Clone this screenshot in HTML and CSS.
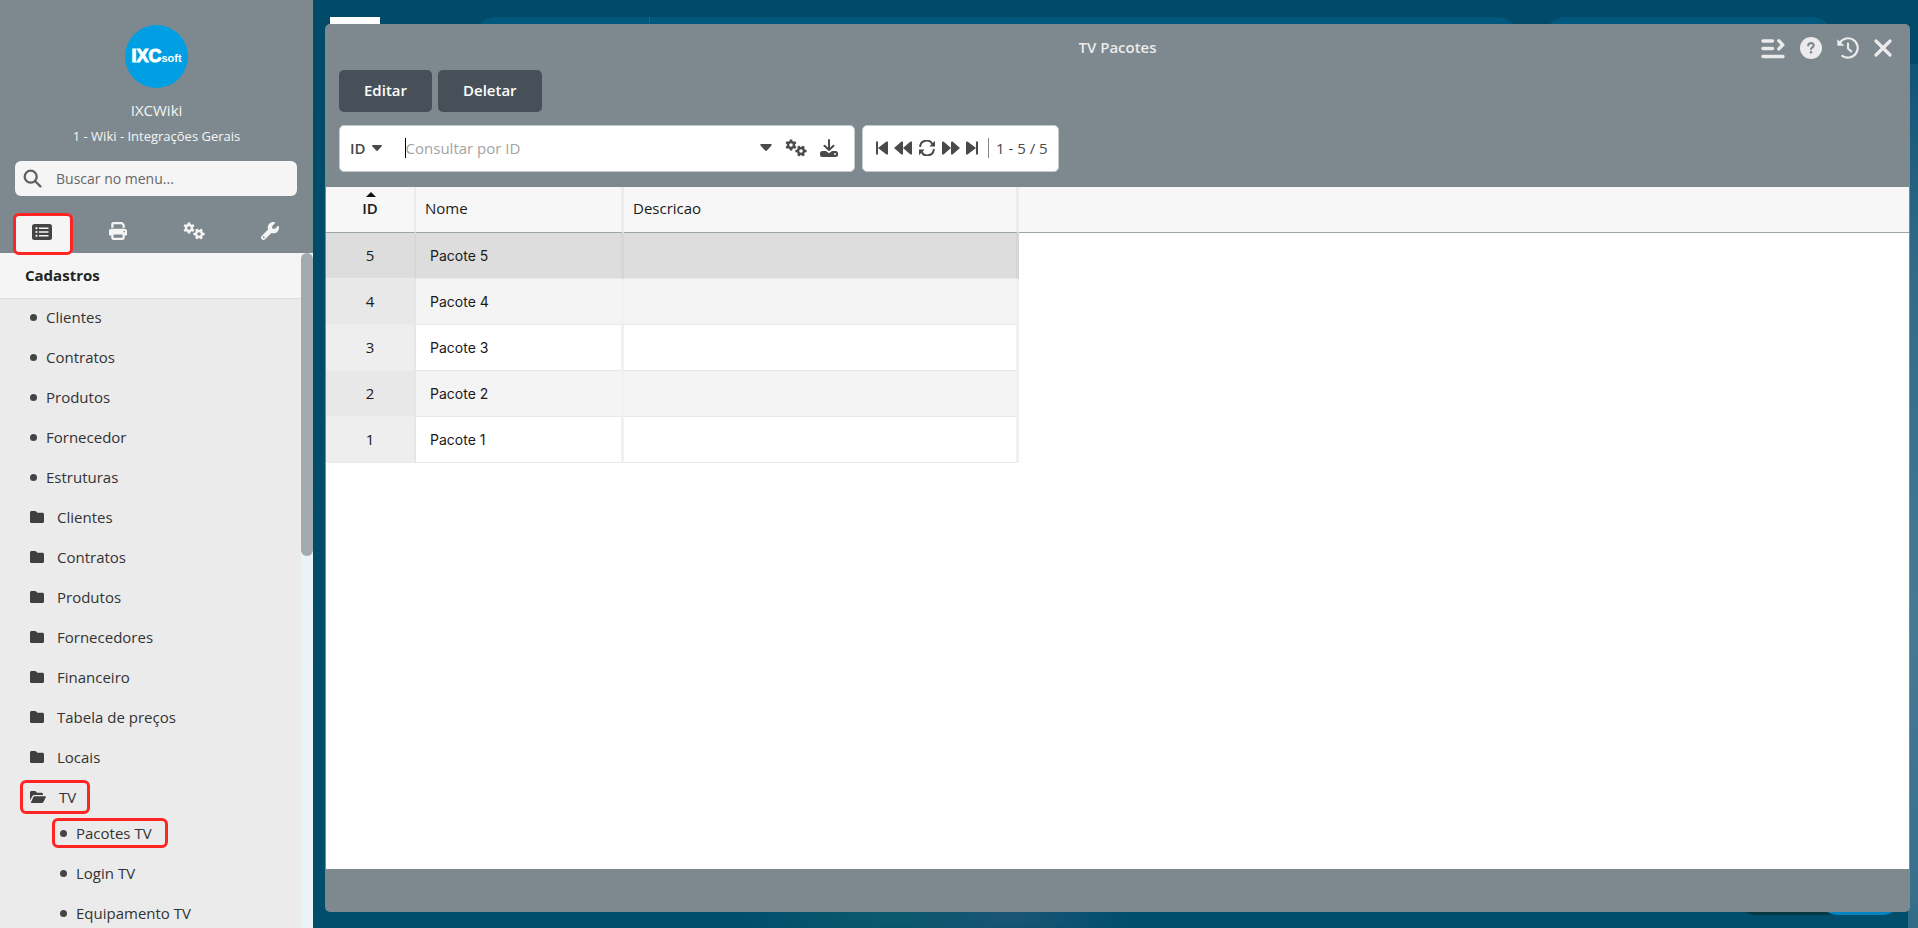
FILE: index.html
```html
<!DOCTYPE html>
<html lang="pt-BR">
<head>
<meta charset="utf-8">
<title>TV Pacotes</title>
<link rel="stylesheet" href="styles.css">
</head>
<body>
<svg class="defs" aria-hidden="true">
  <symbol id="gears" viewBox="0 0 22 18">
    <g fill="none" stroke="currentColor">
      <circle cx="6" cy="6" r="3" stroke-width="2.4"/>
      <path stroke-width="2.6" d="M6 0.4v2M6 9.6v2M1.2 3.2l1.6 1M9.2 7.8l1.6 1M1.2 8.8l1.6-1M9.2 4.2l1.6-1"/>
      <circle cx="16" cy="12" r="3" stroke-width="2.4"/>
      <path stroke-width="2.6" d="M10.4 12h2M19.6 12h2M13.2 7.2l1 1.6M17.8 15.2l1 1.6M18.8 7.2l-1 1.6M14.2 15.2l-1 1.6"/>
    </g>
  </symbol>
  <symbol id="folder" viewBox="0 0 14 12">
    <path fill="currentColor" d="M1.5 0h3.6c.5 0 .9.2 1.200.5l.8.9c.2.2.4.3.700.3h4.700c.8 0 1.500.6 1.500 1.500v7.300c0 .8-.7 1.500-1.500 1.500h-11C.7 12 0 11.300 0 10.500v-9C0 .7.700 0 1.500 0z"/>
  </symbol>
</svg>

<div class="app">
  <aside class="sidebar">
    <header class="profile">
      <div class="logo"><span class="logo-main">IXC</span><span class="logo-sub">soft</span></div>
      <p class="user">IXCWiki</p>
      <p class="company">1 - Wiki - Integrações Gerais</p>
    </header>
    <label class="menu-search">
      <svg width="19" height="19" viewBox="0 0 19 19" aria-hidden="true"><g fill="none" stroke="currentColor" stroke-width="2.300" stroke-linecap="round"><circle cx="7.700" cy="7.700" r="6"/><path d="M12.200 12.200l5.200 5.200"/></g></svg>
      <input type="text" aria-label="Buscar no menu" placeholder="Buscar no menu...">
    </label>
    <nav class="tabs">
      <button class="tab tab-active" aria-label="Cadastros"><svg width="20" height="16" viewBox="0 0 20 16"><rect width="20" height="16" rx="2.500" fill="currentColor"/><g fill="#f5f5f5"><circle cx="4.500" cy="4.200" r="1.100"/><circle cx="4.500" cy="8" r="1.100"/><circle cx="4.500" cy="11.800" r="1.100"/><path d="M7 3.500h9.500v1.500H7zM7 7.300h9.500v1.500H7zM7 11.100h9.500v1.500H7z"/></g></svg></button>
      <button class="tab" aria-label="Relatórios"><svg width="18" height="18" viewBox="0 0 512 512"><path fill="currentColor" d="M128 0C92.700 0 64 28.700 64 64v96h64V64h226.700L384 93.300V160h64V93.300c0-17-6.700-33.300-18.700-45.300L400 18.700C388 6.700 371.700 0 354.700 0H128zm256 352v96H128v-96h256zm64 32h32c17.700 0 32-14.300 32-32v-96c0-35.300-28.700-64-64-64H64c-35.300 0-64 28.700-64 64v96c0 17.700 14.300 32 32 32h32v64c0 35.300 28.700 64 64 64h256c35.300 0 64-28.700 64-64v-64zM432 248a24 24 0 1 1 0 48 24 24 0 1 1 0-48z"/></svg></button>
      <button class="tab" aria-label="Configurações"><svg width="22" height="18"><use href="#gears"/></svg></button>
      <button class="tab" aria-label="Ferramentas"><svg width="18" height="18" viewBox="0 0 512 512"><path fill="currentColor" d="M352 320c88.400 0 160-71.600 160-160 0-15.300-2.200-30.100-6.200-44.200-3.100-10.800-16.400-13.200-24.300-5.300l-76.800 76.800c-3 3-7.100 4.700-11.300 4.700H336c-8.800 0-16-7.200-16-16v-57.400c0-4.200 1.700-8.300 4.700-11.300l76.800-76.800c7.900-7.900 5.400-21.200-5.300-24.300C382.100 2.200 367.300 0 352 0 263.600 0 192 71.600 192 160c0 19.100 3.400 37.500 9.500 54.500L19.900 396.100C7.200 408.800 0 426.100 0 444.100 0 481.600 30.400 512 67.900 512c18 0 35.300-7.200 48-19.900l181.600-181.600c17 6.200 35.400 9.500 54.500 9.500zM80 408a24 24 0 1 1 0 48 24 24 0 1 1 0-48z"/></svg></button>
    </nav>
    <div class="menu">
      <div class="menu-body">
        <h2 class="menu-title">Cadastros</h2>
        <ul class="menu-list">
          <li><a href="#" class="item"><i class="dot"></i>Clientes</a></li>
          <li><a href="#" class="item"><i class="dot"></i>Contratos</a></li>
          <li><a href="#" class="item"><i class="dot"></i>Produtos</a></li>
          <li><a href="#" class="item"><i class="dot"></i>Fornecedor</a></li>
          <li><a href="#" class="item"><i class="dot"></i>Estruturas</a></li>
          <li><a href="#" class="item group"><svg width="14" height="12"><use href="#folder"/></svg>Clientes</a></li>
          <li><a href="#" class="item group"><svg width="14" height="12"><use href="#folder"/></svg>Contratos</a></li>
          <li><a href="#" class="item group"><svg width="14" height="12"><use href="#folder"/></svg>Produtos</a></li>
          <li><a href="#" class="item group"><svg width="14" height="12"><use href="#folder"/></svg>Fornecedores</a></li>
          <li><a href="#" class="item group"><svg width="14" height="12"><use href="#folder"/></svg>Financeiro</a></li>
          <li><a href="#" class="item group"><svg width="14" height="12"><use href="#folder"/></svg>Tabela de preços</a></li>
          <li><a href="#" class="item group"><svg width="14" height="12"><use href="#folder"/></svg>Locais</a></li>
          <li><a href="#" class="item group open"><svg width="16" height="12" viewBox="0 0 16 12"><path fill="currentColor" d="M0 9.300V1.500C0 .7.700 0 1.500 0h3.300c.4 0 .8.200 1 .4l1 1c.2.200.4.300.700.300h4c.8 0 1.500.6 1.500 1.500v.9H4.500c-.9 0-1.700.5-2.200 1.200zM.8 11.700l2.600-5.600c.2-.6.800-.9 1.300-.9h10.600c.5 0 .8.500.5 1l-2.500 5c-.3.500-.8.800-1.300.8H1c-.2 0-.3-.2-.2-.3z"/></svg>TV</a>
            <ul class="submenu">
              <li><a href="#" class="item marked"><i class="dot"></i>Pacotes TV</a></li>
              <li><a href="#" class="item"><i class="dot"></i>Login TV</a></li>
              <li><a href="#" class="item"><i class="dot"></i>Equipamento TV</a></li>
            </ul>
          </li>
        </ul>
      </div>
      <div class="scroll-track"><div class="scroll-thumb"></div></div>
    </div>
  </aside>

  <main class="desktop">
    <div class="backdrop" aria-hidden="true">
      <div class="tile"></div>
      <div class="pill pill-search"></div>
      <div class="pill pill-user"></div>
      <div class="chip chip-dark"></div>
      <div class="chip chip-blue"></div>
    </div>
    <section class="window">
      <header class="window-head">
        <h1 class="window-title">TV Pacotes</h1>
        <div class="window-actions">
          <button aria-label="Opções"><svg width="24" height="22" viewBox="0 0 24 22"><g fill="none" stroke="currentColor" stroke-width="3.400" stroke-linecap="round" stroke-linejoin="round"><path d="M2 4h9.500M2 11.500h9.500M2 19.500h20M17.800 3.700l4 4.200-4 4"/></g></svg></button>
          <button aria-label="Ajuda"><svg width="22" height="22" viewBox="0 0 22 22"><circle cx="11" cy="11" r="11" fill="currentColor"/><path fill="none" stroke="#7d898e" stroke-width="2.100" stroke-linecap="round" d="M8.200 8.500c0-3.300 5.500-3 5.500 0 0 1.800-2.700 1.800-2.700 3.600"/><circle cx="11" cy="15.300" r="1.300" fill="#7d898e"/></svg></button>
          <button aria-label="Histórico"><svg width="22" height="22" viewBox="0 0 22 22"><g fill="none" stroke="currentColor" stroke-width="2.200" stroke-linecap="round" stroke-linejoin="round"><path d="M2.800 5.800a9.700 9.700 0 1 1 2.500 13M11 6.500v5l3.200 2.800"/></g><path fill="currentColor" d="M.3 2.300l7.200 6.400H1.300c-.6 0-1-.4-1-1z"/></svg></button>
          <button aria-label="Fechar"><svg width="18" height="18" viewBox="0 0 18 18"><path fill="none" stroke="currentColor" stroke-width="3.200" stroke-linecap="round" d="M2 2l14 14M16 2L2 16"/></svg></button>
        </div>
      </header>
      <div class="commands">
        <button class="command">Editar</button>
        <button class="command">Deletar</button>
      </div>
      <div class="toolbar">
        <div class="query">
          <button class="field">ID <svg width="10" height="6" viewBox="0 0 10 6"><path fill="currentColor" d="M.8 0h8.400c.7 0 1 .8.500 1.300L5.800 5.500c-.4.500-1.200.5-1.600 0L.3 1.300C-.2.8.1 0 .8 0z"/></svg></button>
          <input class="query-input" type="text" aria-label="Consultar por ID" placeholder="Consultar por ID">
          <button aria-label="Mais"><svg width="12" height="7" viewBox="0 0 10 6"><path fill="currentColor" d="M.8 0h8.400c.7 0 1 .8.500 1.300L5.800 5.500c-.4.500-1.200.5-1.600 0L.3 1.300C-.2.8.1 0 .8 0z"/></svg></button>
          <button aria-label="Configurar"><svg width="22" height="18"><use href="#gears"/></svg></button>
          <button aria-label="Exportar"><svg width="18" height="18" viewBox="0 0 18 18"><path fill="none" stroke="currentColor" stroke-width="2" stroke-linecap="round" stroke-linejoin="round" d="M9 1v9.500M4.500 6.800L9 11l4.500-4.200"/><path fill="currentColor" d="M2.300 12H6l3 2.200L12 12h3.700c1.300 0 2.300 1 2.300 2.300v1.400c0 1.300-1 2.300-2.300 2.300H2.300C1 18 0 17 0 15.700v-1.400C0 13 1 12 2.300 12z"/><circle cx="15" cy="15" r="1" fill="#fff"/></svg></button>
        </div>
        <div class="pager">
          <button aria-label="Primeira"><svg width="12" height="14" viewBox="0 0 12 14"><path fill="currentColor" d="M0 .5h2v13H0zM2 7L10.500.6c.6-.5 1.500-.1 1.500.7v11.400c0 .8-.9 1.200-1.500.7z"/></svg></button>
          <button aria-label="Anterior"><svg width="18" height="14" viewBox="0 0 18 14"><path fill="currentColor" d="M0 7L7.500.6C8.100.1 9 .5 9 1.300V7L16.500.6c.6-.5 1.500-.1 1.500.7v11.400c0 .8-.9 1.200-1.500.7L9 7v5.700c0 .8-.9 1.200-1.500.7z"/></svg></button>
          <button aria-label="Atualizar"><svg width="18" height="16" viewBox="0 0 16 16"><g fill="none" stroke="currentColor" stroke-width="2"><path d="M1.200 7A6.400 6.400 0 0 1 13.500 4.500M14.800 9A6.400 6.400 0 0 1 2.500 11.500"/></g><path fill="currentColor" d="M16 .8v5.700h-5.700zM0 15.200V9.500h5.700z"/></svg></button>
          <button aria-label="Próxima"><svg width="18" height="14" viewBox="0 0 18 14"><path fill="currentColor" d="M18 7L10.500.6C9.900.1 9 .5 9 1.300V7L1.500.6C.9.100 0 .5 0 1.300v11.400c0 .8.900 1.200 1.500.7L9 7v5.700c0 .8.900 1.200 1.500.7z"/></svg></button>
          <button aria-label="Última"><svg width="12" height="14" viewBox="0 0 12 14"><path fill="currentColor" d="M10 .5h2v13h-2zM10 7L1.500.6C.9.100 0 .5 0 1.300v11.400c0 .8.900 1.200 1.500.7z"/></svg></button>
          <span class="range">1 - 5 / 5</span>
        </div>
      </div>
      <div class="grid">
        <table class="records">
          <thead>
            <tr><th class="col-id"><svg class="sort" width="10" height="5" viewBox="0 0 10 5"><path fill="currentColor" d="M5 0l5 5H0z"/></svg>ID</th><th class="col-name">Nome</th><th class="col-desc">Descricao</th><th></th></tr>
          </thead>
          <tbody>
            <tr class="selected"><td>5</td><td>Pacote 5</td><td></td><td></td></tr>
            <tr><td>4</td><td>Pacote 4</td><td></td><td></td></tr>
            <tr><td>3</td><td>Pacote 3</td><td></td><td></td></tr>
            <tr><td>2</td><td>Pacote 2</td><td></td><td></td></tr>
            <tr><td>1</td><td>Pacote 1</td><td></td><td></td></tr>
          </tbody>
        </table>
      </div>
      <footer class="window-foot"></footer>
    </section>
  </main>
</div>
</body>
</html>
```
FILE: styles.css
```css
* { box-sizing: border-box; }

body {
  margin: 0;
  font-family: "Open Sans", "Noto Sans", sans-serif;
  font-size: 15px;
  color: #333;
}

button {
  margin: 0;
  padding: 0;
  border: 0;
  background: none;
  font: inherit;
  color: inherit;
  display: flex;
  align-items: center;
  justify-content: center;
}

input { font: inherit; border: 0; background: none; padding: 0; min-width: 0; outline: none; }
ul { list-style: none; margin: 0; padding: 0; }
p, h1, h2 { margin: 0; }
.defs { position: absolute; width: 0; height: 0; }

.app { display: flex; height: 100vh; overflow: hidden; }

/* Sidebar */
.sidebar {
  flex: 0 0 313px;
  display: flex;
  flex-direction: column;
  background: #7d898e;
}

.profile {
  display: flex;
  flex-direction: column;
  align-items: center;
  padding-top: 25px;
  color: #f5f5f5;
}

.logo {
  width: 63px;
  height: 63px;
  border-radius: 50%;
  background: #009fe3;
  display: flex;
  align-items: baseline;
  justify-content: center;
  line-height: 62px;
  font-family: "Liberation Sans", sans-serif;
  font-weight: 700;
  color: #fff;
}
.logo-main { font-size: 18px; -webkit-text-stroke: 1px #fff; }
.logo-sub { font-size: 11px; }

.user { margin-top: 11px; font-size: 15px; line-height: 22px; font-weight: 500; }
.company { margin-top: 5px; font-size: 13px; line-height: 20px; }

.menu-search {
  display: flex;
  align-items: center;
  gap: 14px;
  margin: 15px 16px 0 15px;
  padding: 0 8px 1px;
  height: 35px;
  border-radius: 6px;
  background: #f5f5f5;
  color: #606060;
}
.menu-search input { flex: 1; font-size: 14px; }
.menu-search input::placeholder { color: #666; }

.tabs { display: flex; justify-content: space-between; padding: 17px 12px 0 13px; color: #f5f5f5; }
.tab { width: 60px; height: 40px; padding: 0 2px 4px 0; }
.tab-active {
  height: 42px;
  margin-bottom: -2px;
  border: 3px solid #ff2424;
  border-radius: 6px;
  background: #f5f5f5;
  color: #444;
  z-index: 1;
}

.menu { flex: 1; display: flex; min-height: 0; background: #ebebeb; }
.menu-body { flex: 1; overflow: hidden; }
.menu-title {
  height: 46px;
  padding-left: 25px;
  border-bottom: 1px solid #dcdcdc;
  background: #f5f5f5;
  font-size: 15px;
  font-weight: 700;
  line-height: 45px;
  color: #222;
}
.menu-list { margin-top: -2px; }
.scroll-track { width: 12px; background: #e9f2f6; }
.scroll-thumb { height: 303px; border-radius: 6px; background: #a2aaaf; }

.item {
  display: flex;
  align-items: center;
  gap: 9px;
  height: 40px;
  padding-left: 30px;
  color: #333;
  text-decoration: none;
}
.dot { width: 7px; height: 7px; border-radius: 50%; background: #444; }
.group { gap: 13px; }
.group svg { color: #404040; }
.open {
  width: 70px;
  height: 34px;
  margin: 3px 0 0 20px;
  padding-left: 7px;
  border: 3px solid #ff2424;
  border-radius: 6px;
  font-weight: 500;
}
.submenu .item { padding-left: 60px; }
.submenu .marked {
  width: 116px;
  height: 30px;
  margin: 4px 0 5px 52px;
  padding-left: 5px;
  border: 3px solid #ff2424;
  border-radius: 6px;
}

/* Desktop behind the window */
.desktop {
  position: relative;
  flex: 1;
  min-width: 0;
  display: flex;
  padding: 24px 8px 16px 12px;
  background: linear-gradient(#014b69, #004d6c);
}
.backdrop {
  position: absolute;
  inset: 0;
  overflow: hidden;
  background:
    linear-gradient(#0f5474, #2e6a87 20%, #457a93 60%, #376f8c 90%, #1d5f7c) right 64px / 10px 100% no-repeat,
    radial-gradient(ellipse 120px 40px at 700px 915px, #1b5675, transparent),
    radial-gradient(ellipse 160px 40px at 580px 915px, #0c5a6d, transparent);
}
.backdrop div { position: absolute; }
.tile { left: 17px; top: 17px; width: 50px; height: 40px; background: #fff; }
.pill { top: 17px; height: 46px; border-radius: 23px; background: #00587f; }
.pill-search { left: 160px; right: 398px; background: linear-gradient(#0a6c97, #0a6c97) 176px 0 / 1px 100% no-repeat #00587f; }
.pill-user { left: 1230px; right: 84px; }
.chip { bottom: 13px; height: 40px; border-radius: 20px; }
.chip-dark { right: 40px; width: 142px; background: #083744; }
.chip-blue { right: 16px; width: 84px; background: #0384c3; }

/* Window */
.window {
  position: relative;
  flex: 1;
  min-width: 0;
  display: flex;
  flex-direction: column;
  padding: 0 1px;
  border-radius: 5px;
  background: #7d898e;
}
.window-head {
  display: grid;
  grid-template-columns: 1fr auto 1fr;
  align-items: center;
  height: 46px;
  padding: 2px 17px 0;
  color: #ebebeb;
}
.window-title { grid-column: 2; padding-bottom: 2px; font-size: 15px; font-weight: 600; }
.window-actions { display: flex; justify-content: flex-end; gap: 15px; }

.commands { display: flex; gap: 6px; padding-left: 13px; }
.command {
  height: 42px;
  padding: 0 25px 2px;
  border-radius: 5px;
  background: #475059;
  color: #fff;
  font-weight: 600;
}

.toolbar { display: flex; gap: 7px; padding: 13px 13px 15px; }
.query, .pager {
  display: flex;
  align-items: center;
  height: 47px;
  border: 1px solid #c5cacc;
  border-radius: 5px;
  background: #fff;
  color: #4a4a4a;
}
.query { width: 516px; gap: 13px; padding: 0 16px 2px 10px; }
.field { gap: 6px; font-weight: 600; }
.query-input { flex: 1; margin-left: 10px; border-left: 1px solid #000; height: 20px; }
.query-input::placeholder { color: #a3a3a3; }
.pager { gap: 6px; padding: 0 10px 2px 13px; }
.range { margin-left: 4px; padding-left: 7px; border-left: 1px solid #888; line-height: 20px; }

.grid { flex: 1; min-height: 0; background: #fff; }
.records { width: 100%; border-collapse: separate; border-spacing: 0; table-layout: fixed; color: #1a1a1a; }
.records th {
  position: relative;
  height: 46px;
  padding: 0 9px 3px;
  border-right: 3px solid #ececec;
  border-bottom: 1px solid #9ba6aa;
  background: #f7f7f7;
  font-weight: 500;
  text-align: left;
  line-height: 20px;
}
.records .col-id { width: 90px; border-right-width: 2px; font-weight: 600; text-align: center; }
.col-name { width: 208px; }
.col-desc { width: 395px; }
.sort { position: absolute; top: 5px; left: 40px; color: #111; }
.records td {
  height: 46px;
  padding: 0 14px 1px;
  border-right: 3px solid #f1f1f1;
  border-bottom: 1px solid #e8e8e8;
}
.records td:nth-child(1) { padding: 0 0 2px; border-right: 2px solid #e6e6e6; border-bottom-color: #ebebeb; background: #eee; text-align: center; }
.records td:nth-child(2) { font-family: Inter, sans-serif; font-size: 14px; }
.records tr:nth-child(even) td { background: #f4f4f4; }
.records tr:nth-child(even) td:nth-child(1) { background: #e8e8e8; }
.records .selected td, .records .selected td:nth-child(1) { border-right-color: #d6d6d6; background: #ddd; }
.records th:nth-child(4), .records tr td:nth-child(4) { border-right: 0; }
.records tbody tr td:nth-child(4) { background: #fff; border-bottom: 0; }

.window-foot { height: 43px; }
```
